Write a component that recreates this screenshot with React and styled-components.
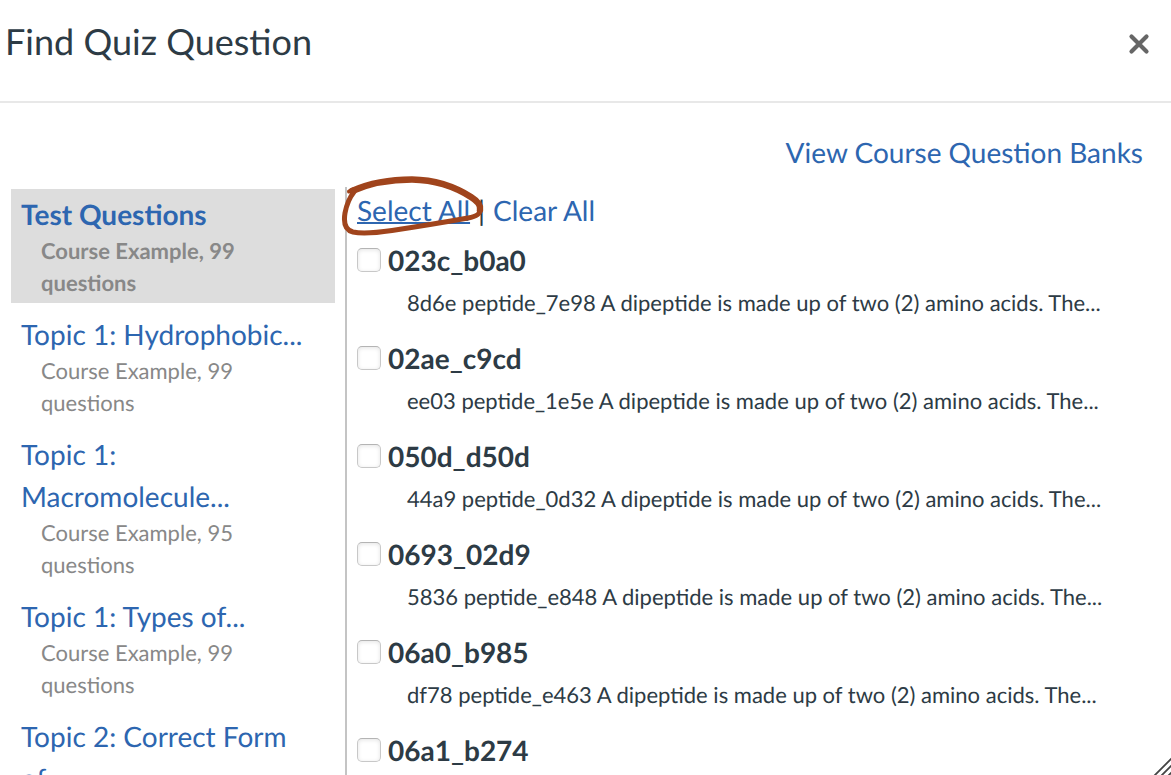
import React from 'react';
import styled, { createGlobalStyle } from 'styled-components';

const Global = createGlobalStyle`
  * { box-sizing: border-box; }
  html, body { margin: 0; height: 100%; overflow: hidden; }
  #root { height: 100%; }
  body {
    font-family: Lato, "Liberation Sans", sans-serif; color: #2d3b45; background: #fff;
    font-size: 28px; line-height: 42px; text-rendering: geometricPrecision;
  }
`;
const Dialog = styled.main`display: flex; flex-direction: column; height: 100%; position: relative; overflow: hidden;`;
const Header = styled.header`
  display: flex; justify-content: space-between; align-items: flex-start;
  flex: none; padding: 16px 0 29px 5px; border-bottom: 2px solid #e8e8e8;
`;
const Title = styled.h1`margin: 0; font-size: 36px; line-height: 50px; font-weight: 400;`;
const Close = styled.button`
  border: 0; background: none; padding: 0; width: 64px; height: 56px; display: flex; align-items: center; justify-content: center;
`;
const Toolbar = styled.div`display: flex; justify-content: flex-end; flex: none; padding: 28px 28px 14px;`;
const Link = styled.a`
  color: #2d66b0; text-decoration: ${p => (p.$underlined ? 'underline' : 'none')};
  text-decoration-thickness: 2px;
`;
const Body = styled.div`display: flex; flex: 1; min-height: 0; padding-left: 11px; gap: 10px;`;
const Banks = styled.ul`list-style: none; margin: 2px 0 0; padding: 0; width: 324px; flex: none; display: flex; flex-direction: column; gap: 6px;`;
const Bank = styled.li`
  padding: 4px 10px; background: ${p => (p.$active ? '#dddddd' : 'transparent')};
  font-weight: ${p => (p.$active ? 700 : 400)};
`;
const BankMeta = styled.div`color: #888; font-size: 22px; line-height: 32px; padding: 0 40px 0 20px;`;
const Questions = styled.section`flex: 1; min-width: 0; border-left: 2px solid #c4c4c4; padding: 2px 10px 0;`;
const Actions = styled.div`display: flex; gap: 8px;`;
const Circled = styled.span`position: relative;`;
const Loop = styled.svg`position: absolute; left: -17px; top: -16px; pointer-events: none;`;
const QuestionList = styled.ul`list-style: none; margin: 8px 0 0; padding: 0;`;
const Question = styled.li`padding-bottom: 12px;`;
const Name = styled.label`display: flex; align-items: center; gap: 7px; font-weight: 700;`;
const Check = styled.input`
  appearance: none; margin: 0; width: 24px; height: 24px; border: 1px solid #c8c8c8; border-top-color: #b4b4b4; border-radius: 5px; background: #fff;
  box-shadow: inset 0 1px 4px #e4e4e4;
`;
const Excerpt = styled.p`margin: 0; padding-left: 50px; font-size: 22px; line-height: 44px; white-space: nowrap;`;
const Grip = styled.svg`position: absolute; right: 0; bottom: 0;`;

const banks = [
  ['Test Questions', 99], ['Topic 1: Hydrophobic...', 99], ['Topic 1: Macromolecule...', 95],
  ['Topic 1: Types of...', 99], ['Topic 2: Correct Form of...'],
];
const questions = [
  ['023c_b0a0', '8d6e peptide_7e98'], ['02ae_c9cd', 'ee03 peptide_1e5e'], ['050d_d50d', '44a9 peptide_0d32'],
  ['0693_02d9', '5836 peptide_e848'], ['06a0_b985', 'df78 peptide_e463'], ['06a1_b274'],
];

export default function App() {
  return (
    <Dialog>
      <Global />
      <Header>
        <Title>Find Quiz Question</Title>
        <Close type="button" aria-label="Close">
          <svg width="24" height="24" viewBox="0 0 24 24"><path d="M4.500 4.500L19.500 19.500M19.500 4.500L4.500 19.500" stroke="#666" strokeWidth="4.200" strokeLinecap="round" /></svg>
        </Close>
      </Header>
      <Toolbar><Link href="#banks">View Course Question Banks</Link></Toolbar>
      <Body>
        <Banks>
          {banks.map(([name, count], i) => (
            <Bank key={name} $active={i === 0}>
              <Link href="#bank">{name}</Link>
              {count && <BankMeta>Course Example, {count} questions</BankMeta>}
            </Bank>
          ))}
        </Banks>
        <Questions>
          <Actions>
            <Circled>
              <Link href="#all" $underlined>Select All</Link>
              <Loop width="148" height="66" viewBox="340 173 148 66" fill="none" stroke="#a0441c" strokeLinecap="round" strokeLinejoin="round">
                <path strokeWidth="4" d="M349 191.500L354 189" />
                <path strokeWidth="6.500" d="M352 191C370 183 392 179.500 412 179.500C438 180 457 188 471 197C479 202 481 206 480 210" />
                <path strokeWidth="5" d="M480 208C481 214 477 216.500 468 218C440 223 415 227 392 230.500C375 233 362 234 353 232C345 230 343.500 222 345 213C346.500 205 350 197 354 192" />
              </Loop>
            </Circled>
            <span>|</span>
            <Link href="#none">Clear All</Link>
          </Actions>
          <QuestionList>
            {questions.map(([name, text]) => (
              <Question key={name}>
                <Name><Check type="checkbox" />{name}</Name>
                {text && <Excerpt>{text} A dipeptide is made up of two (2) amino acids. The...</Excerpt>}
              </Question>
            ))}
          </QuestionList>
        </Questions>
      </Body>
      <Grip width="18" height="18" viewBox="0 0 18 18" stroke="#444" strokeWidth="1.800"><path d="M1 19L19 1M8 19L19 8M15 19L19 15" /></Grip>
    </Dialog>
  );
}
